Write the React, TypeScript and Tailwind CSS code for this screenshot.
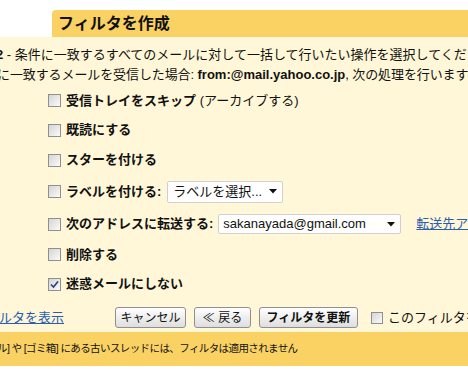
import React from "react";

const jp = "font-['Liberation_Sans','Noto_Sans_CJK_JP',sans-serif]";

const Checkbox = ({ checked = false, small = false }: { checked?: boolean; small?: boolean }) => (
  <span
    className={`relative inline-flex shrink-0 items-center justify-center border border-[#8e8f8f] bg-gradient-to-br from-[#d4d4d4] to-[#fbfbfb] ${
      small ? "w-[12px] h-[12px]" : "w-[13px] h-[13px]"
    }`}
  >
    {checked && (
      <svg width="9" height="9" viewBox="0 0 9 9">
        <path d="M1 4.5 L3.5 7 L8 1.5" fill="none" stroke="#2c3f7a" strokeWidth="1.6" />
      </svg>
    )}
  </span>
);

const Arrow = () => (
  <svg width="8" height="5" viewBox="0 0 8 5" className="shrink-0">
    <path d="M0 0 H8 L4 4.5 Z" fill="#111" />
  </svg>
);

const Option = ({
  h,
  checked,
  children,
}: {
  h: string;
  checked?: boolean;
  children: React.ReactNode;
}) => (
  <div className={`flex items-center gap-[5px] pl-[48px] whitespace-nowrap ${h}`}>
    <Checkbox checked={checked} />
    {children}
  </div>
);

const Button = ({ w, bold, children }: { w: string; bold?: boolean; children: React.ReactNode }) => (
  <button
    type="button"
    className={`${w} h-[21px] shrink-0 rounded-[3px] border border-[#8f8f8f] bg-gradient-to-b from-white to-[#dedede] text-[12px] leading-none text-[#111] ${
      bold ? "font-bold" : ""
    }`}
  >
    {children}
  </button>
);

export default function App() {
  return (
    <div className={`w-[468px] h-[369px] overflow-hidden bg-white text-[#111] ${jp}`}>
      <div className="pt-[10px] pl-[52px]">
        <div className="h-[27px] rounded-tl-[4px] bg-[#fad163] pl-[6px] flex items-center text-[16px] font-bold whitespace-nowrap">
          フィルタを作成
        </div>
      </div>

      <div className="h-[295px] bg-[#fff7d7] pt-[8px] text-[13px] overflow-hidden">
        <div className="h-[20px] leading-[20px] whitespace-nowrap -ml-[4px]">
          <span className="font-bold">2</span> - 条件に一致するすべてのメールに対して一括して行いたい操作を選択してください
        </div>
        <div className="h-[20px] leading-[20px] whitespace-nowrap -ml-[3px] tracking-[-0.1px]">
          に一致するメールを受信した場合: <span className="font-bold tracking-normal">from:@mail.yahoo.co.jp</span>, 次の処理を行います
        </div>

        <div className="pt-[1px]">
          <Option h="h-[29px]">
            <span>
              <span className="font-bold">受信トレイをスキップ</span> (アーカイブする)
            </span>
          </Option>
          <Option h="h-[30px]">
            <span className="font-bold">既読にする</span>
          </Option>
          <Option h="h-[30px]">
            <span className="font-bold">スターを付ける</span>
          </Option>
          <Option h="h-[33px]">
            <span className="font-bold shrink-0">ラベルを付ける:</span>
            <div className="ml-[1px] w-[116px] h-[22px] shrink-0 rounded-[2px] border border-[#cfcfcf] bg-white flex items-center justify-between pl-[5px] pr-[5px]">
              <span>ラベルを選択...</span>
              <Arrow />
            </div>
          </Option>
          <Option h="h-[32px]">
            <span className="font-bold shrink-0">次のアドレスに転送する:</span>
            <div className="w-[183px] h-[20px] shrink-0 rounded-[2px] border border-[#cfcfcf] bg-white flex items-center justify-between pl-[4px] pr-[5px]">
              <span>sakanayada@gmail.com</span>
              <Arrow />
            </div>
            <span className="ml-[10px] shrink-0 text-[#2a5db0] underline">転送先アドレスを追加</span>
          </Option>
          <Option h="h-[29px]">
            <span className="font-bold">削除する</span>
          </Option>
          <Option h="h-[30px]" checked>
            <span className="font-bold">迷惑メールにしない</span>
          </Option>
        </div>

        <div className="flex items-center pt-[8px] whitespace-nowrap">
          <span className="w-[67px] shrink-0 text-[#2a5db0] underline -ml-[1px]">ルタを表示</span>
          <div className="ml-[49px] flex shrink-0 items-center gap-[8px]">
            <Button w="w-[71px]">キャンセル</Button>
            <Button w="w-[57px]">≪ 戻る</Button>
            <Button w="w-[99px]" bold>
              フィルタを更新
            </Button>
          </div>
          <div className="ml-[13px] flex shrink-0 items-center gap-[5px]">
            <Checkbox small />
            <span>このフィルタを下の一致するスレッドにも適用する</span>
          </div>
        </div>
      </div>

      <div className="h-[34px] bg-[#fad163] flex items-center text-[10.5px] whitespace-nowrap">
        <span className="-ml-[3px] tracking-[-0.6px]">ル] や [ゴミ箱] にある古いスレッドには、フィルタは適用されません</span>
      </div>
    </div>
  );
}
